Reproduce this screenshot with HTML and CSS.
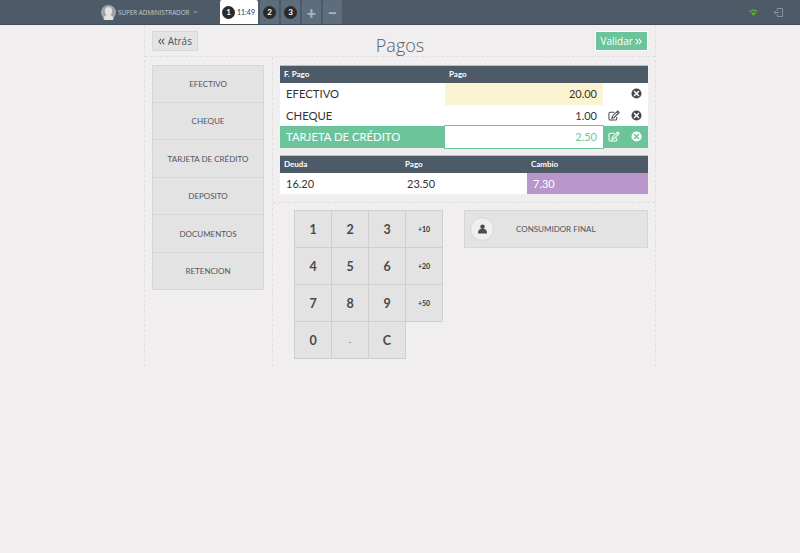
FILE: index.html
```html
<!DOCTYPE html>
<html lang="es">
<head>
  <meta charset="UTF-8">
  <title>Pagos</title>
  <link rel="stylesheet" href="styles.css">
</head>
<body>
  <!-- Barra superior -->
  <header class="topbar">
    <div class="user">
      <span class="avatar">
        <svg viewBox="0 0 16 16" width="15" height="15"><circle cx="8" cy="8" r="8" fill="#a3a3a3"/><ellipse cx="8" cy="6.500" rx="3.800" ry="4.500" fill="#e2e2e2"/><path d="M2.500 15c.6-3.400 3-4.600 5.500-4.600s4.900 1.200 5.500 4.600a8 8 0 0 1-11 0z" fill="#e2e2e2"/></svg>
      </span>
      <span class="user-name">SUPER ADMINISTRADOR</span>
      <svg class="caret" viewBox="0 0 8 5" width="5" height="4"><path d="M1 1l3 3 3-3" fill="none" stroke="#c4ccd3" stroke-width="1.2"/></svg>
    </div>
    <nav class="tabs">
      <div class="tab tab-active"><span class="num">1</span><span class="tab-time">11:49</span></div>
      <div class="tab tab-small"><span class="num">2</span></div>
      <div class="tab tab-small"><span class="num">3</span></div>
      <div class="tab tab-op">+</div>
      <div class="tab tab-op">&minus;</div>
    </nav>
    <div class="status">
      <svg viewBox="0 0 16 12" width="9" height="7"><path d="M0 4.200C4.500 -.6 11.500 -.6 16 4.200l-1.800 1.800C10.600 2.500 5.400 2.500 1.800 6z" fill="#58b02c"/><path d="M3.500 7.500c2.600-2.600 6.400-2.600 9 0L8 12z" fill="#58b02c"/></svg>
      <svg viewBox="0 0 10 10" width="9" height="9"><path d="M3.500.5h6v9h-6M3.500.5V3M3.500 7v2.500M0 5h5.500M2 3L0 5l2 2" fill="none" stroke="#8d99ad" stroke-width="1"/></svg>
    </div>
  </header>

  <main class="panel">
    <div class="panel-head">
      <button class="btn-back">
        <svg class="angles" viewBox="0 0 8 7"><path d="M3.500.5L1 3.500l2.500 3M7 .5l-2.500 3 2.500 3"/></svg>
        Atrás
      </button>
      <h1 class="title">Pagos</h1>
      <button class="btn-ok">
        Validar
        <svg class="angles" viewBox="0 0 8 7"><path d="M1 .5l2.500 3-2.500 3M4.500 .5l2.500 3-2.500 3"/></svg>
      </button>
    </div>

    <div class="panel-body">
      <!-- Formas de pago -->
      <aside class="methods">
        <div class="method">EFECTIVO</div>
        <div class="method">CHEQUE</div>
        <div class="method">TARJETA DE CRÉDITO</div>
        <div class="method">DEPOSITO</div>
        <div class="method">DOCUMENTOS</div>
        <div class="method">RETENCION</div>
      </aside>

      <section class="content">
        <div class="tables">
          <div class="grid-head pay-head pay-cols">
            <span>F. Pago</span><span>Pago</span>
          </div>
          <div class="pay-row pay-cols">
            <span class="pay-name">EFECTIVO</span>
            <span class="pay-value value-first">20.00</span>
            <span class="pay-icon"></span>
            <span class="pay-icon"><svg class="icon-x" viewBox="0 0 12 12"><use href="#close"/></svg></span>
          </div>
          <div class="pay-row pay-cols">
            <span class="pay-name">CHEQUE</span>
            <span class="pay-value">1.00</span>
            <span class="pay-icon"><svg class="icon-edit" viewBox="0 0 13 12"><use href="#edit"/></svg></span>
            <span class="pay-icon"><svg class="icon-x" viewBox="0 0 12 12"><use href="#close"/></svg></span>
          </div>
          <div class="pay-row pay-cols row-active">
            <span class="pay-name">TARJETA DE CRÉDITO</span>
            <span class="pay-value value-active">2.50</span>
            <span class="pay-icon"><svg class="icon-edit" viewBox="0 0 13 12"><use href="#edit"/></svg></span>
            <span class="pay-icon"><svg class="icon-x" viewBox="0 0 12 12"><use href="#close"/></svg></span>
          </div>

          <div class="grid-head sum-cols sum-head">
            <span>Deuda</span><span>Pago</span><span>Cambio</span>
          </div>
          <div class="sum-row sum-cols">
            <span>16.20</span><span>23.50</span><span class="change">7.30</span>
          </div>
        </div>

        <div class="bottom">
          <div class="keypad">
            <div class="key">1</div><div class="key">2</div><div class="key">3</div><div class="key key-small">+10</div>
            <div class="key">4</div><div class="key">5</div><div class="key">6</div><div class="key key-small">+20</div>
            <div class="key">7</div><div class="key">8</div><div class="key">9</div><div class="key key-small">+50</div>
            <div class="key">0</div><div class="key key-small">.</div><div class="key">C</div>
          </div>
          <div class="customer">
            <span class="customer-icon">
              <svg viewBox="0 0 10 11" width="9" height="10"><circle cx="5" cy="3" r="2.500" fill="#4d4d4d"/><path d="M0 10.500c0-3.500 1.500-5 3.200-5h3.600c1.700 0 3.200 1.500 3.200 5z" fill="#4d4d4d"/></svg>
            </span>
            <span class="customer-name">CONSUMIDOR FINAL</span>
          </div>
        </div>
      </section>
    </div>
  </main>

  <!-- Iconos reutilizados -->
  <svg class="defs" width="0" height="0">
    <symbol id="close" viewBox="0 0 12 12">
      <path fill-rule="evenodd" fill="currentColor" d="M6 .5a5.500 5.500 0 1 1 0 11 5.500 5.500 0 0 1 0-11zM3.900 2.800L2.800 3.900 4.900 6 2.800 8.100l1.100 1.100L6 7.100l2.100 2.100 1.100-1.100L7.100 6l2.100-2.100-1.100-1.100L6 4.900z"/>
    </symbol>
    <symbol id="edit" viewBox="0 0 13 12">
      <path fill="none" stroke="currentColor" stroke-width="1.1" d="M9.500 7.500v2a1.500 1.500 0 0 1-1.500 1.500H2.500A1.500 1.500 0 0 1 1 9.500V4a1.500 1.500 0 0 1 1.500-1.500H7"/>
      <path fill="none" stroke="currentColor" stroke-width="1.1" d="M10.500 1l1.700 1.700-5.700 5.700-2.300.6.600-2.300zM9.200 2.300l1.700 1.700"/>
    </symbol>
  </svg>
</body>
</html>
```

FILE: styles.css
```css
* {
  box-sizing: border-box;
}

body {
  margin: 0;
  min-height: 553px;
  background: #f0eeef;
  font-family: "Lato", sans-serif;
  color: #333;
}

.defs {
  position: absolute;
}

/* Barra superior */
.topbar {
  height: 25px;
  background: #4d5b68;
  border-bottom: 1px solid #3f4a55;
  display: flex;
  align-items: flex-start;
  padding-left: 101px;
}

.user {
  width: 119px;
  height: 24px;
  display: flex;
  align-items: center;
  color: #c4ccd3;
  font-family: "Open Sans", sans-serif;
  font-size: 6.300px;
}

.avatar {
  width: 15px;
  height: 15px;
  margin-right: 2px;
  display: flex;
}

.caret {
  margin-left: 4px;
}

.tabs {
  display: flex;
  gap: 2px;
}

.tab {
  height: 24px;
  width: 19px;
  background: #5e6d7d;
  border-radius: 2px 2px 0 0;
  display: flex;
  align-items: center;
  justify-content: center;
  color: #aab4bd;
  font-size: 16px;
  font-weight: 900;
}

.tab-active {
  width: 38px;
  background: #fff;
  color: #333;
  gap: 2px;
  padding-right: 1px;
}

.tab-time {
  font-size: 7px;
  font-weight: 400;
}

.num {
  width: 13px;
  height: 13px;
  border-radius: 50%;
  background: #2a2a2a;
  color: #fff;
  font-size: 8px;
  font-weight: 700;
  display: flex;
  align-items: center;
  justify-content: center;
}

.status {
  margin-left: auto;
  margin-right: 17px;
  height: 24px;
  display: flex;
  align-items: center;
  gap: 16px;
}

/* Panel central */
.panel {
  width: 512px;
  margin: 0 0 0 144px;
  border-left: 1px dashed #e0dede;
  border-right: 1px dashed #e0dede;
}

.panel-head {
  height: 32px;
  padding: 6px 7px 0;
  border-bottom: 1px dashed #e0dede;
  display: flex;
  justify-content: space-between;
  align-items: flex-start;
  position: relative;
}

.angles {
  width: 7px;
  height: 7px;
  fill: none;
  stroke: currentColor;
  stroke-width: 1.300;
}

.btn-back {
  height: 20px;
  width: 46px;
  padding: 0;
  background: #e4e4e4;
  border: 1px solid #d8d8d8;
  color: #555;
  font-family: "Open Sans", sans-serif;
  font-size: 10px;
}

.title {
  margin: 0;
  position: absolute;
  left: 0;
  right: 0;
  top: 8px;
  text-align: center;
  font-family: "Open Sans", sans-serif;
  font-size: 18px;
  font-weight: 300;
  line-height: 24px;
  color: #55626e;
}

.btn-ok {
  height: 20px;
  width: 53px;
  padding: 0;
  background: #6cc49a;
  border: 1px solid #fff;
  color: #fff;
  font-family: "Open Sans", sans-serif;
  font-size: 10px;
  position: relative;
}

.panel-body {
  display: flex;
  height: 310px;
}

.methods {
  flex: none;
  width: 128px;
  padding: 8px 8px 0 7px;
  border-right: 1px dashed #e0dede;
}

.method {
  height: 37.500px;
  padding-top: 1px;
  background: #e3e3e3;
  border: 1px solid #d6d6d6;
  border-top-width: 0;
  display: flex;
  align-items: center;
  justify-content: center;
  font-size: 8px;
  color: #4e5660;
}

.method:first-child {
  border-top-width: 1px;
}

.content {
  flex: 1;
}

.tables {
  padding: 8px 7px 8px 7px;
  border-bottom: 1px dashed #e0dede;
}

.grid-head {
  height: 18px;
  padding-bottom: 2px;
  background: #4d5b68;
  border-top: 1px solid #b9bfc4;
  color: #fff;
  font-size: 8px;
  font-weight: 700;
  align-items: center;
}

.grid-head span {
  padding-left: 4px;
}

.pay-cols {
  display: grid;
  grid-template-columns: 165px 158px 22px 23px;
}

.sum-cols {
  display: grid;
  grid-template-columns: 121px 126px 121px;
}

.pay-row {
  height: 21.500px;
  background: #fff;
  font-size: 11.300px;
  color: #333;
  align-items: stretch;
}

.pay-name {
  padding-left: 6px;
  display: flex;
  align-items: center;
}

.pay-value {
  font-size: 11px;
  display: flex;
  align-items: center;
  justify-content: flex-end;
  padding-right: 6px;
}

.value-first {
  background: #fcf3d0;
}

.pay-icon {
  display: flex;
  align-items: center;
  justify-content: center;
  color: #484848;
}

.icon-x {
  width: 11px;
  height: 11px;
}

.icon-edit {
  width: 12px;
  height: 11px;
}

.row-active {
  background: #6cc49a;
  color: #fff;
}

.row-active .pay-icon {
  color: #fff;
}

.value-active {
  background: #fff;
  color: #6cc49a;
  box-shadow: 0 0 0 1px #6cc49a;
}

.sum-head {
  margin-top: 7.500px;
}

.sum-row {
  height: 21px;
  background: #fff;
  font-size: 11px;
  align-items: stretch;
}

.sum-row span {
  display: flex;
  align-items: center;
  padding-left: 6px;
}

.sum-row .change {
  background: #b896ca;
  color: #fff;
}

/* Teclado y cliente */
.bottom {
  display: flex;
  padding: 7px 7px 0 21px;
}

.keypad {
  width: 149px;
  display: grid;
  grid-template-columns: repeat(4, 37px);
  grid-auto-rows: 37px;
}

.key {
  background: #e3e3e3;
  border: 1px solid #cfcfcf;
  margin: 0 -1px -1px 0;
  display: flex;
  align-items: center;
  justify-content: center;
  font-size: 12.500px;
  font-weight: 700;
  color: #4a4a4a;
}

.key-small {
  font-size: 7px;
  color: #333;
}

.customer {
  margin-left: 21px;
  width: 184px;
  height: 38px;
  background: #e3e3e3;
  border: 1px solid #d6d6d6;
  display: flex;
  align-items: center;
  padding-left: 5px;
  font-size: 8px;
  color: #4e5660;
}

.customer-icon {
  width: 24px;
  height: 24px;
  border-radius: 50%;
  background: #f0eeef;
  border: 1px solid #d6d6d6;
  display: flex;
  align-items: center;
  justify-content: center;
}

.customer-name {
  margin-left: 22px;
}
```
